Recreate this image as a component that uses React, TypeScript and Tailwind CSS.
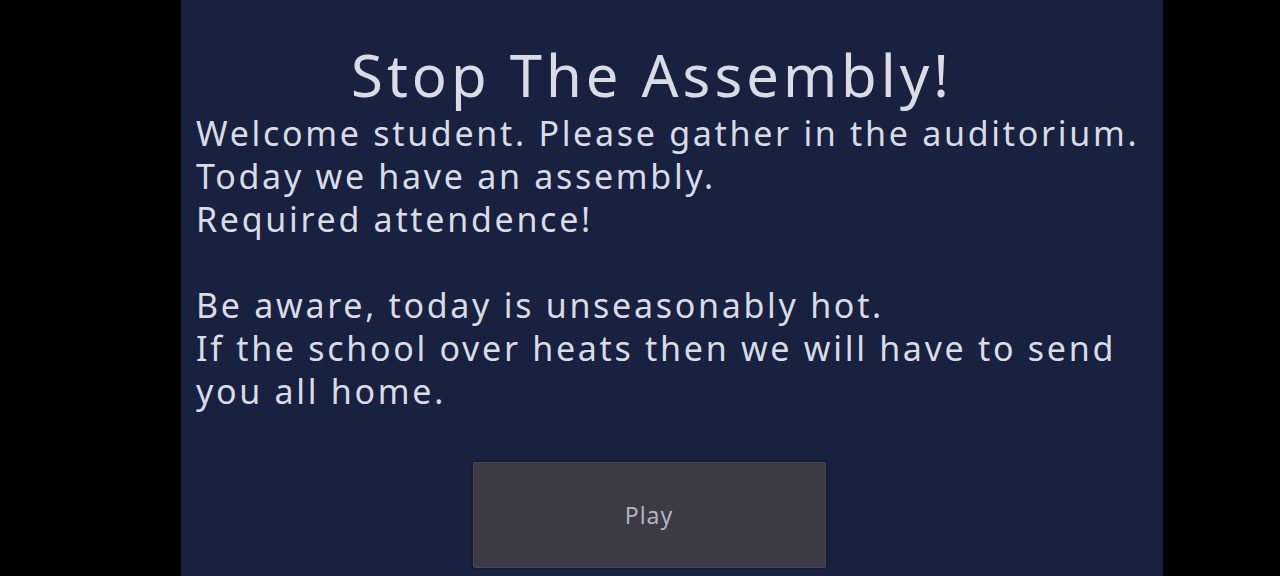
export default function App() {
  return (
    <div className="flex h-[576px] w-[1280px] overflow-hidden bg-black">
      <div className="ml-[181px] flex h-full w-[982px] flex-col bg-[#18213f] pl-[15px] pr-[55px] font-['Noto_Sans',sans-serif] text-[#d9dce4]">
        <h1 className="mt-[40px] text-center text-[58px] leading-[70px] tracking-[4px]">Stop The Assembly!</h1>
        <div className="mt-[2px] whitespace-nowrap text-[34px] leading-[43px] tracking-[2.7px]">
          <p>Welcome student. Please gather in the auditorium.</p>
          <p>Today we have an assembly.</p>
          <p>Required attendence!</p>
          <p>&nbsp;</p>
          <p>Be aware, today is unseasonably hot.</p>
          <p>If the school over heats then we will have to send</p>
          <p>you all home.</p>
        </div>
        <div className="mt-[49px] flex justify-center pr-[6px]">
          <button
            type="button"
            className="h-[106px] w-[353px] rounded-[2px] border border-[#4a4956] bg-[#3c3a45] text-[23px] tracking-[1px] text-[#b3b3bc] shadow-[0_0_3px_rgba(0,0,0,0.6)]"
          >
            Play
          </button>
        </div>
      </div>
    </div>
  )
}
